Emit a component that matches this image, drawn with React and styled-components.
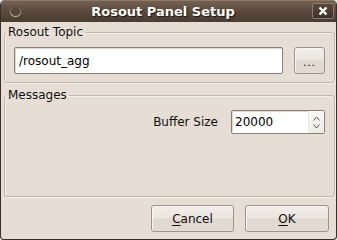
import React from "react";
import styled, { createGlobalStyle } from "styled-components";

const GlobalStyle = createGlobalStyle`
  html, body {
    margin: 0;
    padding: 0;
    background: #e9e9e9;
  }
  body {
    font-family: "DejaVu Sans", "Liberation Sans", sans-serif;
    font-size: 12px;
  }
`;

const Window = styled.div`
  width: 337px;
  height: 240px;
  box-sizing: border-box;
  display: flex;
  flex-direction: column;
  background: #e6ddd4;
  border: 1px solid #3a2e26;
  border-top: none;
  border-radius: 5px 5px 4px 4px;
  overflow: hidden;
`;

const TitleBar = styled.div`
  height: 22px;
  margin: 0 -1px;
  flex: none;
  display: flex;
  align-items: center;
  padding: 0 3px 0 9px;
  background: linear-gradient(#766353 0%, #5e4d40 45%, #4a3c31 100%);
  box-shadow: inset 0 1px 0 #8c7868;
  color: #ffffff;
`;

const TitleText = styled.div`
  flex: 1;
  text-align: center;
  font-weight: bold;
  font-size: 13px;
  text-shadow: 1px 1px 1px #1e1610;
  padding-right: 8px;
`;

const CloseButton = styled.div`
  width: 20px;
  height: 14px;
  border: 1px solid #8d7b6d;
  border-radius: 2px;
  background: linear-gradient(#5a4a3d, #3c3028);
  display: flex;
  align-items: center;
  justify-content: center;
`;

const Body = styled.div`
  flex: 1;
  display: flex;
  flex-direction: column;
  padding: 3px 1px 7px 3px;
`;

const Group = styled.fieldset`
  margin: ${(p) => (p.$first ? "0" : "5px 0 0")};
  padding: 8px 9px 8px 9px;
  border: 1px solid #c4b8ab;
  border-radius: 3px;
  box-shadow: 1px 1px 0 #f4efea, inset 1px 1px 0 #f4efea;
  flex: ${(p) => (p.$grow ? "1" : "none")};
  min-width: 0;
`;

const Legend = styled.legend`
  margin-left: -8px;
  padding: 0 2px;
  line-height: 14px;
  color: #101010;
`;

const Row = styled.div`
  display: flex;
  align-items: center;
  justify-content: ${(p) => (p.$end ? "flex-end" : "flex-start")};
  gap: ${(p) => p.$gap || 11}px;
`;

const TextInput = styled.div`
  flex: 1;
  height: 27px;
  box-sizing: border-box;
  background: #ffffff;
  border: 1px solid #8c7f73;
  border-radius: 2px;
  box-shadow: inset 1px 1px 0 #e0d8d0;
  display: flex;
  align-items: center;
  padding-left: 4px;
  color: #000;
`;

const Button = styled.div`
  width: ${(p) => p.$w}px;
  height: 27px;
  box-sizing: border-box;
  border: 1px solid #a09386;
  border-radius: 3px;
  background: linear-gradient(#f2eee9 0%, #ebe5df 48%, #e0d7ce 52%, #e3dbd3 100%);
  box-shadow: inset 1px 1px 0 #f8f6f3;
  display: flex;
  align-items: center;
  justify-content: center;
  color: #101010;
`;

const Dots = styled.span`
  font-size: 10px;
  letter-spacing: 1px;
  padding-top: 3px;
  color: #000;
`;

const Mnemonic = styled.span`
  text-decoration: underline;
  text-underline-offset: 2px;
`;

const FieldLabel = styled.span`
  color: #101010;
  padding-right: 2px;
`;

const SpinBox = styled.div`
  width: 94px;
  height: 24px;
  box-sizing: border-box;
  display: flex;
  background: #ffffff;
  border: 1px solid #8c7f73;
  border-radius: 2px;
`;

const SpinValue = styled.div`
  flex: 1;
  display: flex;
  align-items: center;
  padding-left: 3px;
  color: #000;
  box-shadow: inset 1px 1px 0 #e0d8d0;
`;

const SpinArrows = styled.div`
  width: 15px;
  display: flex;
  flex-direction: column;
  align-items: center;
  justify-content: center;
  gap: 3px;
  background: linear-gradient(#fbfaf8, #efebe6);
  border-left: 1px solid #ece6e0;
`;

const ButtonRow = styled.div`
  display: flex;
  justify-content: flex-end;
  gap: 11px;
  margin-top: 8px;
  padding-right: 6px;
`;

function Chevron({ up }) {
  return (
    <svg width="7" height="5" viewBox="0 0 7 5">
      <path
        d={up ? "M0.5 4.5 L3.5 1 L6.5 4.5" : "M0.5 0.5 L3.5 4 L6.5 0.5"}
        fill="none"
        stroke="#555"
        strokeWidth="1"
      />
    </svg>
  );
}

export default function App() {
  return (
    <>
      <GlobalStyle />
      <Window>
        <TitleBar>
          <svg width="13" height="13" viewBox="0 0 13 13">
            <defs>
              <linearGradient id="ring" x1="0" y1="0" x2="0" y2="1">
                <stop offset="0" stopColor="#5c4d42" />
                <stop offset="1" stopColor="#b3a79e" />
              </linearGradient>
            </defs>
            <circle cx="6.5" cy="6.5" r="5.2" fill="#574739" stroke="url(#ring)" strokeWidth="1.2" />
          </svg>
          <TitleText>Rosout Panel Setup</TitleText>
          <CloseButton>
            <svg width="10" height="10" viewBox="0 0 10 10">
              <path d="M1.5 1.5 L8.5 8.5 M8.5 1.5 L1.5 8.5" stroke="#fff" strokeWidth="2.4" />
            </svg>
          </CloseButton>
        </TitleBar>
        <Body>
          <Group $first>
            <Legend>Rosout Topic</Legend>
            <Row>
              <TextInput>/rosout_agg</TextInput>
              <Button $w={31}>
                <Dots>...</Dots>
              </Button>
            </Row>
          </Group>
          <Group $grow>
            <Legend>Messages</Legend>
            <Row $end $gap={11}>
              <FieldLabel>Buffer Size</FieldLabel>
              <SpinBox>
                <SpinValue>20000</SpinValue>
                <SpinArrows>
                  <Chevron up />
                  <Chevron />
                </SpinArrows>
              </SpinBox>
            </Row>
          </Group>
          <ButtonRow>
            <Button $w={83}>
              <span>
                <Mnemonic>C</Mnemonic>ancel
              </span>
            </Button>
            <Button $w={84}>
              <span>
                <Mnemonic>O</Mnemonic>K
              </span>
            </Button>
          </ButtonRow>
        </Body>
      </Window>
    </>
  );
}
